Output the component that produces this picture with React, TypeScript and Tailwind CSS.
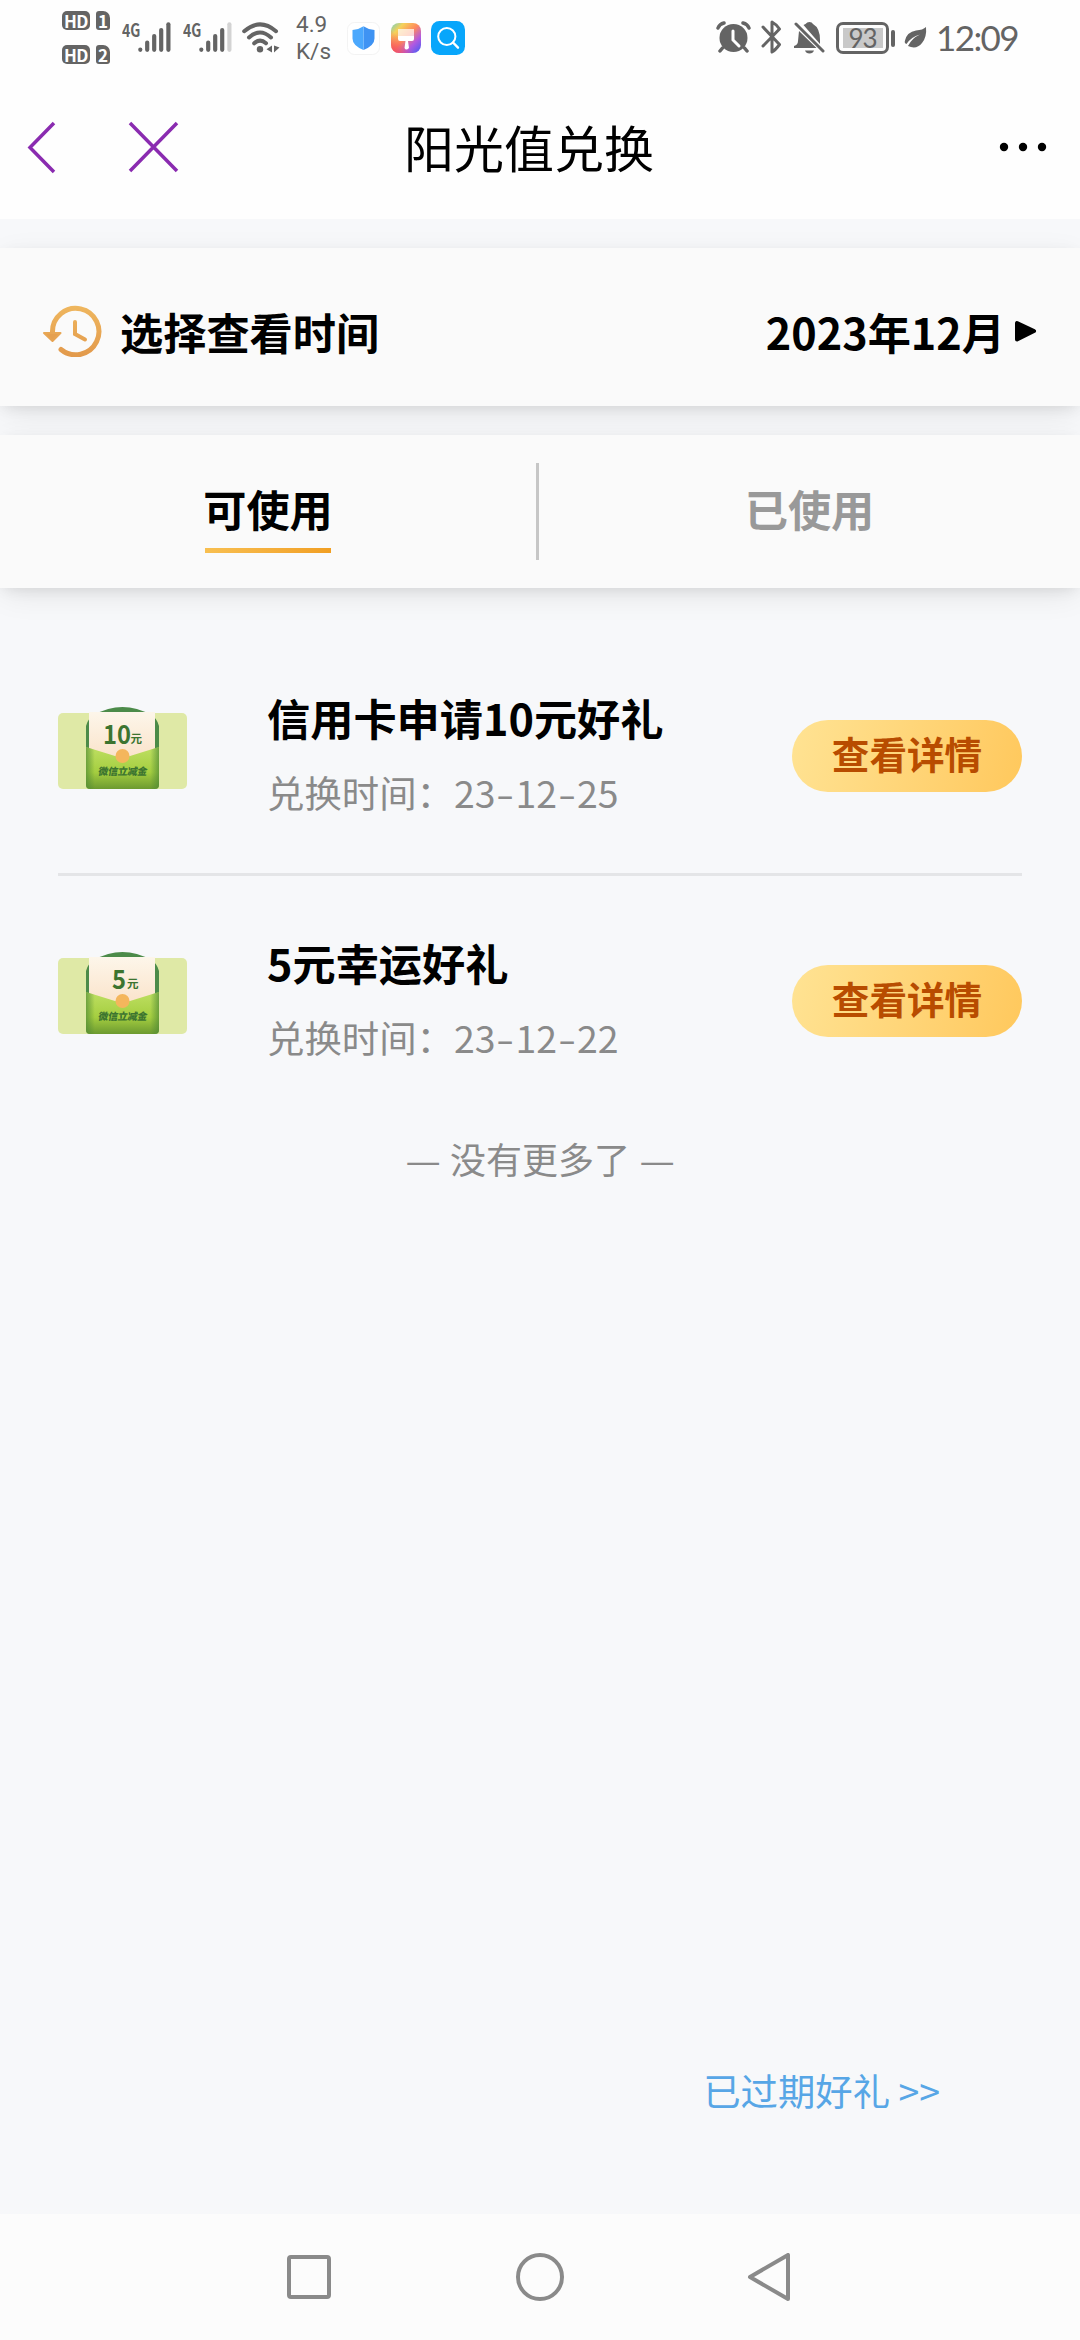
import type { ReactNode } from "react";

const gifts = [
  { id: 1, title: "信用卡申请10元好礼", amount: "10", date: "23-12-25" },
  { id: 2, title: "5元幸运好礼", amount: "5", date: "23-12-22" },
] as const;

function SimBadge({ slot }: { slot: string }) {
  return (
    <div className="flex gap-[6px] text-[17px] leading-[19px] font-bold text-white">
      <span className="flex h-[19px] w-[28px] items-center justify-center rounded-[5px] bg-[#646464] tracking-tight">
        HD
      </span>
      <span className="flex h-[19px] w-[14px] items-center justify-center rounded-[3px] rounded-tr-[7px] bg-[#646464]">
        {slot}
      </span>
    </div>
  );
}

function Signal({ weak }: { weak?: boolean }) {
  return (
    <div className="flex h-[30px] w-[49px] items-start">
      <span className="w-[16px] origin-left scale-x-[0.78] text-[18px] leading-[14px] font-bold">4G</span>
      <svg width="33" height="30" viewBox="0 0 33 30" stroke="#646464" strokeWidth="4.2" strokeLinecap="round">
        <path d="M2.3 27.5v.3M9.2 20.5v7.3M16.2 14v13.8M23.2 8v19.8" />
        <path d="M30.4 2.3v25.5" stroke={weak ? "#d3d3d3" : "#646464"} />
      </svg>
    </div>
  );
}

function WifiIcon() {
  return (
    <svg width="38" height="31" viewBox="0 0 38 31" fill="none" stroke="#646464" strokeWidth="4" strokeLinecap="round">
      <path d="M2.2 9.2Q18 -4.5 34 9.2" />
      <path d="M7 15.5Q18 5.5 29 15.5" />
      <path d="M12.2 21.3Q18 16 24 21.3" />
      <circle cx="18" cy="27.3" r="3.2" fill="#646464" stroke="none" />
      <path d="M30 23.5v7l-5.5-3.2zM32 23.5v7l5.5-5z" fill="#646464" stroke="none" />
    </svg>
  );
}

function AppBadges() {
  return (
    <>
      <svg className="ml-[18px]" width="33" height="33" viewBox="0 0 33 33">
        <rect x=".5" y=".5" width="32" height="32" rx="7" fill="#fff" stroke="#f3f3f3" />
        <path d="M16.5 4.2Q21 7.4 27.5 8v8.5q0 7-11 11.5z" fill="#3f93f3" />
        <path d="M16.5 4.2Q12 7.4 5.5 8v8.5q0 7 11 11.5z" fill="#4ba8fd" />
      </svg>
      <svg className="ml-[11px]" width="30" height="30" viewBox="0 0 30 30">
        <defs>
          <linearGradient id="paint" x1="0" y1="0" x2="1" y2="1">
            <stop offset="0" stopColor="#6fd0c4" />
            <stop offset=".22" stopColor="#f5d25a" />
            <stop offset=".48" stopColor="#ff8a5c" />
            <stop offset=".72" stopColor="#b35ae0" />
            <stop offset="1" stopColor="#3f5cf5" />
          </linearGradient>
          <linearGradient id="paintLow" x1="0" y1="1" x2=".4" y2=".6">
            <stop offset="0" stopColor="#f4485e" />
            <stop offset="1" stopColor="#f4485e" stopOpacity="0" />
          </linearGradient>
        </defs>
        <rect width="30" height="30" rx="8" fill="url(#paint)" />
        <rect width="30" height="30" rx="8" fill="url(#paintLow)" />
        <path d="M7 6h16v7H7z" fill="#fff" opacity=".7" />
        <path d="M7 13h16v3q0 2-2 2h-4l1 7q-3 3-4.5 0l1-7H9q-2 0-2-2z" fill="#fff" />
      </svg>
      <svg className="ml-[10px]" width="34" height="34" viewBox="0 0 34 34" fill="none">
        <rect width="34" height="34" rx="8.5" fill="#08a6fb" />
        <circle cx="15.8" cy="15.5" r="8.6" stroke="#fff" strokeWidth="2" />
        <path d="m22 21.5 5 5.2" stroke="#fff" strokeWidth="2.4" strokeLinecap="round" />
      </svg>
    </>
  );
}

function StatusBar() {
  return (
    <div className="flex h-[76px] items-start pr-[62px] pl-[62px] text-[#646464]">
      <div className="flex flex-col gap-[15px] pt-[11px]">
        <SimBadge slot="1" />
        <SimBadge slot="2" />
      </div>
      <div className="flex pt-[22px] pl-[12px]">
        <Signal />
        <div className="w-[12px]" />
        <Signal weak />
        <div className="w-[10px]" />
        <WifiIcon />
      </div>
      <div className="flex w-[49px] flex-col pt-[11px] pl-[16px] font-[Roboto] text-[22.5px] leading-[27px]">
        <span>4.9</span>
        <span>K/s</span>
      </div>
      <div className="flex items-center pt-[21px]">
        <AppBadges />
      </div>
      <div className="ml-auto flex h-[76px] items-start">
        <svg className="mt-[21px]" width="35" height="32" viewBox="0 0 35 32" fill="none" stroke="#646464">
          <circle cx="17.5" cy="17" r="14" fill="#646464" stroke="none" />
          <path d="M2 7q1.500-4 6-5M33 7q-1.500-4-6-5M6.500 27l-2.500 3M28.500 27l2.500 3" strokeWidth="3.5" strokeLinecap="round" />
          <path d="M17 10v9l6 6" stroke="#fff" strokeWidth="3" strokeLinecap="round" />
        </svg>
        <svg className="mt-[20px] ml-[10px]" width="21" height="34" viewBox="0 0 21 34" fill="none" stroke="#646464" strokeWidth="3" strokeLinecap="round" strokeLinejoin="round">
          <path d="m2 7 16.500 17.500q-4.500 6-7.500 7.500V2q4 2 7.500 7L2 26" />
        </svg>
        <svg className="mt-[21px] ml-[12px]" width="31" height="33" viewBox="0 0 31 33" fill="#646464">
          <path d="M9.500 4Q10.500 3.500 11.500 3 13 1 15.500 1t3.500 2q7 4 7 16v4zM5 10l17.500 17H0v-2q4-1 4-5zM11 29.500h9q-1 3-4.500 3t-4.500-3z" />
          <path d="m2 3 27 27" stroke="#646464" strokeWidth="3" strokeLinecap="round" />
        </svg>
        <div className="mt-[22px] ml-[11px] flex items-center">
          <div className="flex h-[32px] w-[53px] items-center justify-center rounded-[7px] border-[3px] border-[#646464]">
            <span className="flex h-[20px] w-[40px] items-center justify-center bg-[#c9c9c9] font-[Lato] text-[26px] leading-none tracking-[-1px]">
              93
            </span>
          </div>
          <div className="ml-[2px] h-[17px] w-[4px] rounded-full bg-[#646464]" />
        </div>
        <svg className="mt-[26px] ml-[9px]" width="23" height="24" viewBox="0 0 23 24">
          <path d="M22 1q1 10-4 16-5.500 7-14 3Q8 12 16 8.500 7 11 2.500 18 0 17 1 14.500 3 6 12 4.500 19 4 22 1z" fill="#646464" />
        </svg>
        <div className="mt-[16px] ml-[9px] w-[82px] font-[Lato] text-[35px] leading-[42px] tracking-[-1.6px]">12:09</div>
      </div>
    </div>
  );
}

function TitleBar() {
  return (
    <header className="grid h-[143px] grid-cols-3 items-center px-[27px] pb-[2px]">
      <svg width="152" height="54" viewBox="0 0 152 54" fill="none" stroke="#8a2bb0" strokeWidth="3.5">
        <path d="M27 3 3 27.500 27 52M103 3l47 48M150 3l-47 48" />
      </svg>
      <h1 className="pr-[22px] pb-[2px] text-center text-[50px] leading-[60px] whitespace-nowrap text-black">阳光值兑换</h1>
      <svg className="mr-[5px] justify-self-end" width="50" height="10" viewBox="0 0 50 10" fill="#000">
        <circle cx="6" cy="5" r="4.2" />
        <circle cx="25" cy="5" r="4.2" />
        <circle cx="44" cy="5" r="4.2" />
      </svg>
    </header>
  );
}

function Panel({ children }: { children: ReactNode }) {
  return (
    <div className="bg-[#fafafa] shadow-[0_8px_30px_-4px_rgba(0,0,0,0.1),0_4px_14px_-4px_rgba(0,0,0,0.1)]">{children}</div>
  );
}

function HistoryIcon() {
  return (
    <svg width="60" height="52" viewBox="0 0 60 52" fill="none" stroke="url(#amber)" strokeWidth="5" strokeLinecap="round">
      <defs>
        <linearGradient id="amber" gradientUnits="userSpaceOnUse" x1="30" y1="0" x2="30" y2="52">
          <stop offset="0" stopColor="#efb75f" />
          <stop offset="1" stopColor="#e2994b" />
        </linearGradient>
      </defs>
      <path d="M10.500 27A23.200 23.200 0 1 1 19 44.500" />
      <path d="M2 28h16.500L10.500 36z" fill="#e5a04f" strokeWidth="2" strokeLinejoin="round" />
      <path d="M33 17v12l10 5.500" strokeWidth="4" />
    </svg>
  );
}

function Envelope({ amount }: { amount: string }) {
  const grad = `pocket${amount}`;
  const wide = amount.length > 1;
  return (
    <svg width="129" height="84" viewBox="0 0 129 84">
      <defs>
        <linearGradient id={grad} x1="0" y1="0" x2="0" y2="1">
          <stop offset="0" stopColor="#bedf62" />
          <stop offset=".6" stopColor="#a5ce40" />
          <stop offset="1" stopColor="#6c9a30" />
        </linearGradient>
        <linearGradient id={`${grad}Card`} x1="0" y1="0" x2="0" y2="1">
          <stop offset="0" stopColor="#fdf6ea" />
          <stop offset="1" stopColor="#fadfc4" />
        </linearGradient>
        <linearGradient id={`${grad}Side`} x1="0" y1="0" x2="1" y2="0">
          <stop offset="0" stopColor="#4f8a35" stopOpacity=".7" />
          <stop offset=".12" stopColor="#4f8a35" stopOpacity="0" />
          <stop offset=".88" stopColor="#4f8a35" stopOpacity="0" />
          <stop offset="1" stopColor="#4f8a35" stopOpacity=".7" />
        </linearGradient>
      </defs>
      <rect y="7" width="129" height="76" rx="5" fill="#dfe9a6" />
      <path d="M28 46V20Q30 12 36 9q14-8 28.500-8T93 9q6 3 8 11v26z" fill="#4c8b49" />
      <path d="M31 6h66v45L64.500 62 31 51z" fill={`url(#${grad}Card)`} />
      <path d="M28 41l29 9q7.500 2 15 0l29-9v38q0 4-4 4H32q-4 0-4-4z" fill={`url(#${grad})`} />
      <path d="M28 41l29 9q7.500 2 15 0l29-9v38q0 4-4 4H32q-4 0-4-4z" fill={`url(#${grad}Side)`} />
      <circle cx="64.5" cy="50" r="7" fill="#f4b65c" />
      <g fill="#3c7430" fontWeight="700">
        <text x={wide ? 45 : 54} y="38" fontSize="26" textLength={wide ? 28 : 14} lengthAdjust="spacingAndGlyphs">
          {amount}
        </text>
        <text x={wide ? 72.5 : 69} y="37" fontSize="11.5">
          元
        </text>
        <text x="52" y="69" fontSize="10" transform="skewX(-10)" textLength="49" fontWeight="900">
          微信立减金
        </text>
      </g>
    </svg>
  );
}

function GiftRow({ gift }: { gift: (typeof gifts)[number] }) {
  return (
    <li className="flex h-[245px] items-center border-b-[3px] border-[#e4e5e7] pt-[8px] last:border-transparent">
      <div className="w-[209px] pb-[17px]">
        <Envelope amount={gift.amount} />
      </div>
      <div className="flex-1 pb-[4px]">
        <h2 className="text-[43.2px] leading-[60px] font-bold text-black">{gift.title}</h2>
        <p className="mt-[15px] text-[37.4px] leading-[60px] text-[#8a8a8a]">
          兑换时间：
          {gift.date.split("-").map((part, i) => (
            <span key={i}>
              {i > 0 && <span className="inline-block w-[20px] scale-x-[1.4] text-center">-</span>}
              {part}
            </span>
          ))}
        </p>
      </div>
      <button className="h-[72px] w-[230px] rounded-full bg-linear-105 from-[#ffe393] to-[#ffc85c] pb-[6px] text-[37.6px] leading-[60px] font-bold text-[#b84c00]">
        查看详情
      </button>
    </li>
  );
}

function NavBar() {
  return (
    <nav className="flex h-[126px] items-center bg-[#fcfcfc] pt-[4px] pl-[285px]">
      <svg width="508" height="52" viewBox="0 0 508 52" fill="none" stroke="#8a8a8a" strokeWidth="4" strokeLinejoin="round">
        <rect x="4" y="4" width="40" height="40" rx="2" />
        <circle cx="255" cy="24" r="22" />
        <path d="M503 2v44L465 24z" />
      </svg>
    </nav>
  );
}

export default function App() {
  return (
    <div className="flex h-[2340px] w-[1080px] flex-col overflow-hidden bg-[#f7f8fa] font-['Noto_Sans_CJK_SC',sans-serif]">
      <div className="bg-[#fefefe]">
        <StatusBar />
        <TitleBar />
      </div>
      <div className="mt-[29px] flex flex-col gap-[29px]">
        <Panel>
          <div className="flex h-[158px] items-center pt-[8px] pr-[43px] pl-[42px] text-[43.2px] leading-[60px] font-bold text-black">
            <HistoryIcon />
            <span className="ml-[18px]">选择查看时间</span>
            <span className="ml-auto">2023年12月</span>
            <svg className="ml-[9px]" width="23" height="24" viewBox="0 0 23 24">
              <path d="M3 4v16.500L20 12z" stroke="#000" strokeWidth="4" strokeLinejoin="round" />
            </svg>
          </div>
        </Panel>
        <Panel>
          <div className="flex h-[153px] items-center text-[43.2px] leading-[60px] font-bold">
            <div className="flex w-[536px] flex-col items-center pt-[7px]">
              <span className="text-black">可使用</span>
              <div className="mt-[10px] h-[5px] w-[126px] bg-linear-to-r from-[#f8bf50] to-[#f19f22]" />
            </div>
            <div className="h-[97px] w-[3px] bg-[#c6c6c6]" />
            <div className="flex flex-1 justify-center pb-[8px] text-[#999999]">已使用</div>
          </div>
        </Panel>
      </div>
      <main className="flex flex-1 flex-col px-[58px] pt-[43px]">
        <ul>
          {gifts.map((gift) => (
            <GiftRow key={gift.id} gift={gift} />
          ))}
        </ul>
        <p className="mt-[7px] flex justify-center gap-[11px] text-[36px] leading-[60px] text-[#8a8a8a]">
          <span className="scale-x-110">—</span>
          没有更多了
          <span className="scale-x-110">—</span>
        </p>
        <a className="mt-auto mr-[82px] mb-[94px] self-end text-[37.4px] leading-[60px] text-[#57a6e6]">已过期好礼 &gt;&gt;</a>
      </main>
      <NavBar />
    </div>
  );
}
